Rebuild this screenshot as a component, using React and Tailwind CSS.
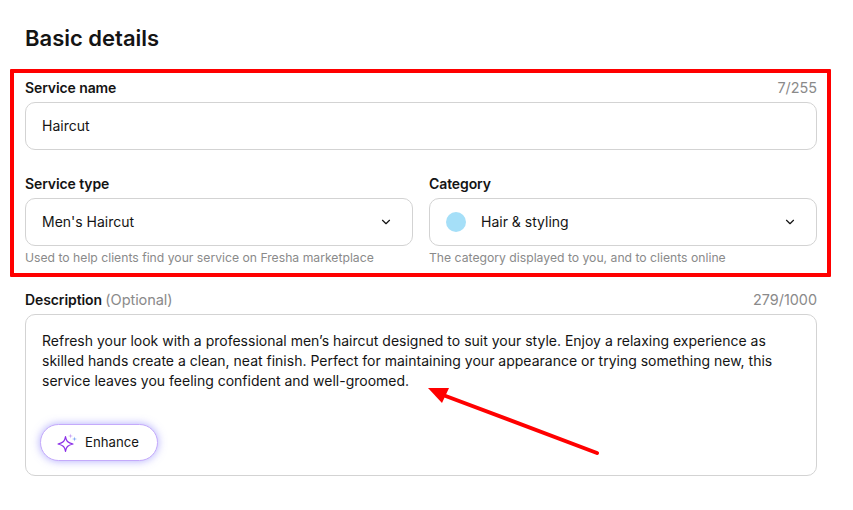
import React from "react";
import { ChevronDown } from "lucide-react";

function Label({ children, right }) {
  return (
    <div className="flex items-center justify-between h-5 mb-[4px]">
      <span className="text-[14px] leading-5 font-semibold text-[#141414] tracking-[-0.1px]">{children}</span>
      {right && <span className="text-[14.4px] leading-5 text-[#8a8a8a]">{right}</span>}
    </div>
  );
}

function Select({ children }) {
  return (
    <div className="h-12 border border-[#d3d3d3] rounded-[10px] flex items-center justify-between pl-4 pr-[19px] bg-white">
      <div className="flex items-center text-[14px] text-[#141414]">{children}</div>
      <ChevronDown size={14} strokeWidth={2} className="text-[#141414]" />
    </div>
  );
}

export default function App() {
  return (
    <div className="relative w-[853px] h-[510px] overflow-hidden bg-white font-['Inter',sans-serif]">
      <div className="pl-[25px] w-[817px] pt-[24px]">
        <h1 className="text-[22px] leading-[28px] font-semibold text-[#141414]">Basic details</h1>
        <div className="mt-[26px]">
          <Label right="7/255">Service name</Label>
          <div className="h-12 border border-[#d3d3d3] rounded-[10px] flex items-center pl-4 pb-[2px] text-[14px] text-[#141414]">Haircut</div>
        </div>
        <div className="grid grid-cols-2 gap-4 mt-[24px]">
          <div>
            <Label>Service type</Label>
            <Select><span className="pb-[2px]">Men's Haircut</span></Select>
            <p className="mt-[2px] text-[12.2px] leading-5 text-[#8a8a8a]">Used to help clients find your service on Fresha marketplace</p>
          </div>
          <div>
            <Label>Category</Label>
            <Select>
              <span className="w-5 h-5 rounded-full bg-[#a5dff8] mr-[15px]" />
              <span className="pb-[2px]">Hair &amp; styling</span>
            </Select>
            <p className="mt-[2px] text-[12.2px] leading-5 text-[#8a8a8a]">The category displayed to you, and to clients online</p>
          </div>
        </div>
        <div className="mt-[22px]">
          <Label right="279/1000">
            Description <span className="font-normal text-[14.6px] text-[#8a8a8a]">(Optional)</span>
          </Label>
          <div className="h-[162px] border border-[#d3d3d3] rounded-[10px] pl-4 pr-3 pt-[16px]">
            <p className="text-[14px] leading-[20px] text-[#141414]">
              Refresh your look with a professional men’s haircut designed to suit your style. Enjoy a relaxing experience as skilled hands create a clean, neat finish. Perfect for maintaining your appearance or trying something new, this service leaves you feeling confident and well-groomed.
            </p>
            <div className="mt-[33px] -ml-[2px] inline-flex items-center h-[37px] w-[118px] pl-[16px] gap-[8px] rounded-full border border-[#c4aafb] bg-white shadow-[0_0_8px_rgba(110,100,250,0.55)] text-[13.2px] text-[#141414]">
              <svg width="20" height="20" viewBox="0 0 20 20" fill="none">
                <path d="M8.5 3.5 C9.2 8 10.5 9.8 16 11 C10.5 12.2 9.2 14 8.5 18.5 C7.8 14 6.5 12.2 1 11 C6.5 9.8 7.8 8 8.5 3.5 Z" stroke="#8b2fe8" strokeWidth="1.2" strokeLinejoin="round" />
                <path d="M13.5 0.5 L14 2.5 L16 3 L14 3.5 L13.5 5.5 L13 3.5 L11 3 L13 2.5 Z" fill="#c7a4f5" />
                <path d="M17.5 3.5 L18 5.5 L20 6 L18 6.5 L17.5 8.5 L17 6.5 L15 6 L17 5.5 Z" fill="#7fa6f5" />
              </svg>
              Enhance
            </div>
          </div>
        </div>
      </div>

      <div className="absolute left-[10px] top-[69px] w-[821px] h-[208px] border-[4px] border-[#ff0000] rounded-[1px] pointer-events-none" />
      <svg className="absolute left-0 top-0 pointer-events-none" width="853" height="510">
        <line x1="597" y1="453" x2="443" y2="395" stroke="#ff0000" strokeWidth="4" strokeLinecap="round" />
        <polygon points="428,388 449,388 442,403" fill="#ff0000" />
      </svg>
    </div>
  );
}
